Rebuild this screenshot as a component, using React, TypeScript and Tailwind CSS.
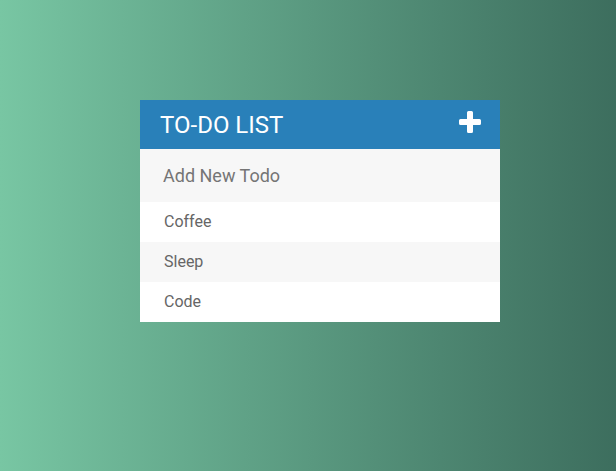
import React from 'react';

const todos = ['Coffee', 'Sleep', 'Code'];

function PlusIcon() {
  return (
    <svg viewBox="0 0 22 22" className="w-[22px] h-[22px]" fill="white">
      <path d="M8 1.5a1.5 1.5 0 0 1 1.5-1.5h3A1.5 1.5 0 0 1 14 1.5V8h6.5A1.5 1.5 0 0 1 22 9.5v3a1.5 1.5 0 0 1-1.5 1.5H14v6.5a1.5 1.5 0 0 1-1.5 1.5h-3A1.5 1.5 0 0 1 8 20.5V14H1.5A1.5 1.5 0 0 1 0 12.5v-3A1.5 1.5 0 0 1 1.5 8H8z" />
    </svg>
  );
}

export default function App() {
  return (
    <div className="min-h-screen w-full bg-gradient-to-r from-[#78c6a3] to-[#3d6e5e] pt-[100px] pl-[140px] font-['Roboto',sans-serif]">
      <div className="w-[360px] bg-white">
        {/* Header */}
        <h1 className="flex items-center justify-between bg-[#2980b9] text-white px-5 pt-[11px] pb-[9px] text-[24px] leading-[29px] font-normal uppercase">
          <span>To-Do List</span>
          <span className="mr-[-1px] mb-[7px]">
            <PlusIcon />
          </span>
        </h1>

        {/* Input */}
        <input
          type="text"
          placeholder="Add New Todo"
          className="block w-full bg-[#f7f7f7] text-[18px] leading-[21px] text-[#666] placeholder:text-[#757575] px-5 py-[13px] border-[3px] border-transparent outline-none box-border h-[53px]"
        />

        {/* List */}
        <ul>
          {todos.map((todo, i) => (
            <li
              key={todo}
              className={`h-10 leading-10 text-[16px] text-[#666] pl-6 ${i % 2 === 1 ? 'bg-[#f7f7f7]' : 'bg-white'}`}
            >
              {todo}
            </li>
          ))}
        </ul>
      </div>
    </div>
  );
}
